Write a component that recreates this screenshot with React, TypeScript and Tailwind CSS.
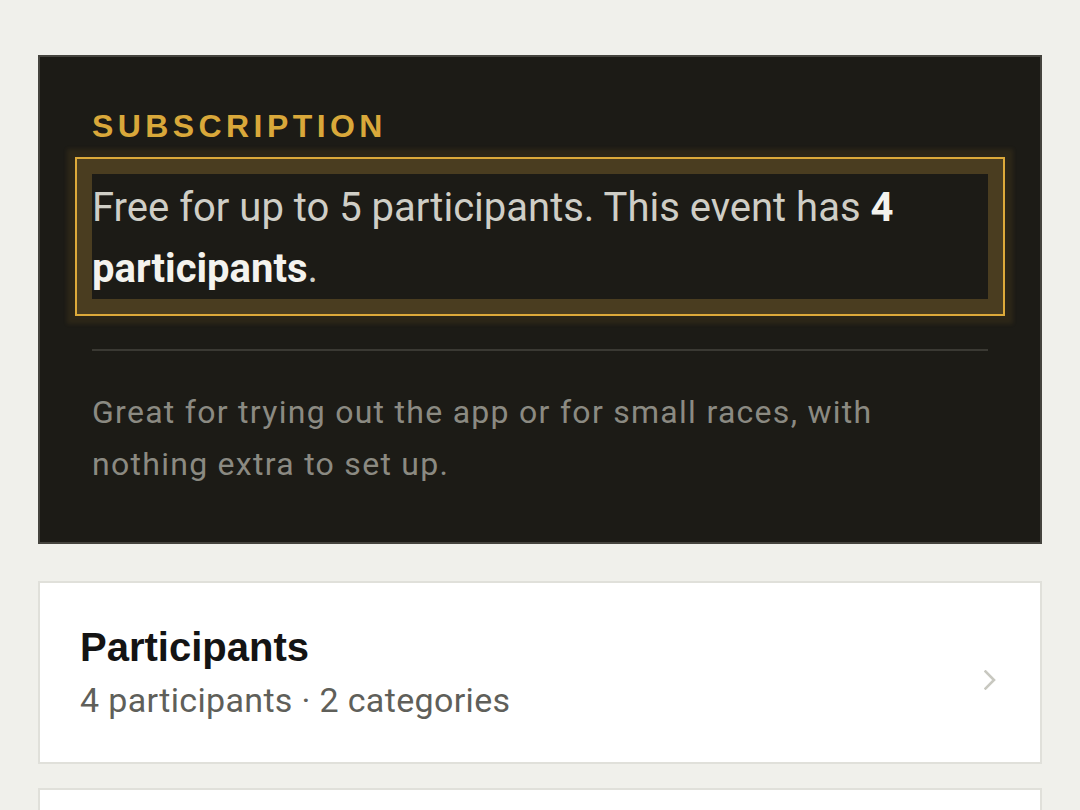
import React from "react";

export default function App() {
  return (
    <div className="h-[810px] w-full overflow-hidden bg-[#f0f0eb] px-[38px] pt-[55px] font-['Roboto',sans-serif]">
      <div className="border-2 border-[#45443e] bg-[#1c1b16] px-[52px] pt-[53px] pb-[52px]">
        <div className="font-['Liberation_Sans',Arial,sans-serif] text-[32px] font-bold leading-none tracking-[0.138em] text-[#d9a83a]">
          SUBSCRIPTION
        </div>
        <p className="mt-[32px] pt-[3px] text-[40px] leading-[61px] text-[#cfcec6] outline-[2.5px] outline-solid outline-[#dca93a] outline-offset-[15px] shadow-[0_0_0_17px_#4a3d20,0_0_4px_25px_rgba(130,100,40,0.16)]">
          Free for up to 5 participants. This event has{" "}
          <strong className="font-bold text-[#f4f3ee]">4 participants</strong>.
        </p>
        <div className="mt-[50px] h-[2px] bg-[#3a3933]" />
        <p className="mt-[35px] text-[32px] leading-[52px] tracking-[0.04em] text-[#8b8a82]">
          Great for trying out the app or for small races, with nothing extra to set up.
        </p>
      </div>

      <div className="mt-[37px] flex items-center border-2 border-[#e0e0da] bg-white pl-[40px] pr-[44px] pt-[40px] pb-[38px]">
        <div className="flex flex-1 flex-col">
          <div className="font-['Liberation_Sans',Arial,sans-serif] text-[40px] font-bold leading-[48px] text-[#141414]">
            Participants
          </div>
          <div className="mt-[6px] text-[34px] leading-[47px] tracking-[0.01em] text-[#5f5f5a]">
            4 participants · 2 categories
          </div>
        </div>
        <svg width="12" height="20" viewBox="0 0 12 20" fill="none" className="mt-[12px]">
          <path d="M1.5 1.5 L10 10 L1.5 18.5" stroke="#c8c8c0" strokeWidth="2.6" strokeLinecap="square" />
        </svg>
      </div>

      <div className="mt-[24px] h-[60px] border-2 border-b-0 border-[#e0e0da] bg-white" />
    </div>
  );
}
